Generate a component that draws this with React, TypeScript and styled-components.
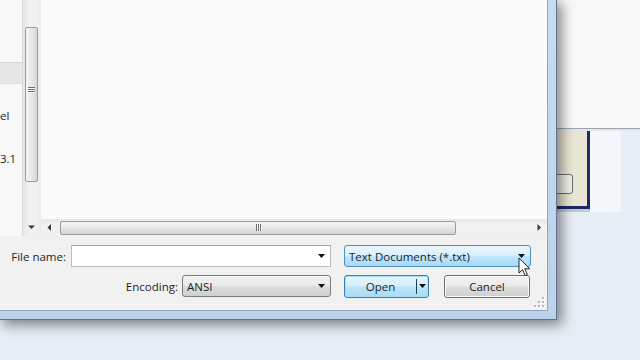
import React from 'react'
import styled, { createGlobalStyle } from 'styled-components'

const GlobalStyle = createGlobalStyle`
  html, body {
    margin: 0;
    padding: 0;
    background: #e7edf4;
    overflow: hidden;
  }
`

const Desktop = styled.div`
  position: relative;
  width: 640px;
  height: 360px;
  overflow: hidden;
  background: #e7edf4;
  font-family: "Open Sans", "Noto Sans", sans-serif;
  font-size: 11.5px;
  color: #1e1e1e;
`

// window behind the dialog, on the right
const BackWindow = styled.div`
  position: absolute;
  left: 500px;
  top: 0;
  width: 140px;
  height: 214px;
  display: flex;
  flex-direction: column;
`

const BackTop = styled.div`
  height: 128px;
  background: #f8f8f8;
`

const BackRule = styled.div`
  height: 2px;
  border-top: 1px solid #9ca3ab;
  background: #dfe6ee;
`

const BackBody = styled.div`
  flex: 1;
  display: flex;
`

const BeigePanel = styled.div`
  width: 90px;
  display: flex;
  flex-direction: column;
  align-items: flex-end;
  padding: 43px 14px 0 0;
  box-sizing: border-box;
  background: linear-gradient(90deg, #efece0 0%, #e9e5d2 100%);
  border-right: 3px solid #1b2a6b;
  border-bottom: 3px solid #1b2a6b;
  box-shadow: 0 3px 0 #c4c8cf;
  height: 78px;
`

const BackButton = styled.div`
  width: 50px;
  height: 18px;
  border: 1px solid #6f6f6f;
  border-radius: 3px;
  background: #f1f0ea;
`

const LightPanel = styled.div`
  flex: 1;
  height: 81px;
  background: linear-gradient(90deg, #f6f8fb 0%, #f4f7fa 60%, #e8eef5 62%, #e8eef5 100%);
`

// the Open dialog
const Dialog = styled.div`
  position: absolute;
  left: 0;
  top: 0;
  width: 557px;
  height: 320px;
  box-sizing: border-box;
  padding: 0 7px 7px 0;
  background: linear-gradient(180deg, #c9dcef 0%, #bcd2ea 100%);
  border-right: 1px solid #5e7591;
  border-bottom: 1px solid #5e7591;
  box-shadow: 4px 4px 12px 1px rgba(0, 0, 0, 0.45);
`

const Client = styled.div`
  width: 548px;
  height: 311px;
  display: flex;
  flex-direction: column;
  background: #f1f1f1;
  border-right: 1px solid #90a6c0;
  border-bottom: 1px solid #90a6c0;
  box-sizing: border-box;
`

const Panes = styled.div`
  height: 236px;
  display: flex;
`

const NavPane = styled.div`
  width: 23px;
  background: #f8f8f8;
  border-right: 1px solid #d9d9d9;
  box-sizing: border-box;
  display: flex;
  flex-direction: column;
  overflow: hidden;
`

const NavItem = styled.div<{ $top: number; $selected?: boolean }>`
  margin-top: ${p => p.$top}px;
  height: 20px;
  display: flex;
  align-items: center;
  white-space: nowrap;
  background: ${p => (p.$selected ? '#e6e6e6' : 'transparent')};
  border-top: 1px solid ${p => (p.$selected ? '#d6d6d6' : 'transparent')};
  border-bottom: 1px solid ${p => (p.$selected ? '#dedede' : 'transparent')};
`

const VScroll = styled.div`
  width: 16px;
  display: flex;
  flex-direction: column;
  align-items: center;
  background: linear-gradient(90deg, #e6e6e6 0%, #f2f2f2 40%, #f0f0f0 100%);
`

const VThumb = styled.div`
  margin-top: 27px;
  width: 13px;
  height: 155px;
  box-sizing: border-box;
  border: 1px solid #9a9a9a;
  border-radius: 2px;
  background: linear-gradient(90deg, #f4f4f4 0%, #e9e9e9 45%, #d6d6d6 100%);
  display: flex;
  align-items: center;
  justify-content: center;
  padding-bottom: 30px;
`

const Grip = styled.div<{ $vertical?: boolean }>`
  display: flex;
  flex-direction: ${p => (p.$vertical ? 'row' : 'column')};
  gap: 1px;
  & > span {
    display: block;
    width: ${p => (p.$vertical ? '1px' : '7px')};
    height: ${p => (p.$vertical ? '7px' : '1px')};
    background: #6b6b6b;
    box-shadow: ${p => (p.$vertical ? '1px 0 0 #fff' : '0 1px 0 #fff')};
  }
`

const ArrowCell = styled.div`
  width: 16px;
  height: 17px;
  display: flex;
  align-items: center;
  justify-content: center;
  flex-shrink: 0;
`

const Spacer = styled.div`
  flex: 1;
`

const Splitter = styled.div`
  width: 2px;
  background: #ececec;
`

const MainPane = styled.div`
  flex: 1;
  display: flex;
  flex-direction: column;
`

const ListArea = styled.div`
  flex: 1;
  background: #fbfbfb;
`

const HScroll = styled.div`
  height: 17px;
  display: flex;
  align-items: center;
  background: linear-gradient(180deg, #e7e7e7 0%, #f2f2f2 40%, #f0f0f0 100%);
`

const HThumb = styled.div`
  margin-left: 3px;
  width: 396px;
  height: 14px;
  box-sizing: border-box;
  border: 1px solid #9a9a9a;
  border-radius: 2px;
  background: linear-gradient(180deg, #f4f4f4 0%, #e8e8e8 45%, #d3d3d3 100%);
  display: flex;
  align-items: center;
  justify-content: center;
`

const Footer = styled.div`
  flex: 1;
  position: relative;
  display: flex;
  flex-direction: column;
  gap: 8px;
  padding-top: 9px;
`

const Row = styled.div`
  display: flex;
  align-items: center;
  height: 22px;
`

const Label = styled.div<{ $width: number; $gap: number }>`
  width: ${p => p.$width}px;
  text-align: right;
  margin-right: ${p => p.$gap}px;
  flex-shrink: 0;
`

const Combo = styled.div<{ $width: number; $variant: 'edit' | 'list' | 'hover' }>`
  width: ${p => p.$width}px;
  height: 22px;
  box-sizing: border-box;
  display: flex;
  align-items: center;
  padding-left: 4px;
  margin-right: ${p => (p.$variant === 'hover' ? 0 : 13)}px;
  flex-shrink: 0;
  border: 1px solid ${p => (p.$variant === 'edit' ? '#b8bcc3' : p.$variant === 'hover' ? '#4e8fc2' : '#7c7c7c')};
  border-top-color: ${p => (p.$variant === 'edit' ? '#9da3ac' : undefined)};
  border-radius: ${p => (p.$variant === 'edit' ? 1 : 3)}px;
  background: ${p =>
    p.$variant === 'edit'
      ? '#ffffff'
      : p.$variant === 'hover'
        ? 'linear-gradient(180deg, #eaf6fd 0%, #d9f0fc 48%, #bee6fd 52%, #a7d9f5 100%)'
        : 'linear-gradient(180deg, #f2f2f2 0%, #ebebeb 48%, #dddddd 52%, #cfcfcf 100%)'};
`

const ComboText = styled.span`
  flex: 1;
  white-space: nowrap;
`

const DropArrow = styled.div`
  width: 17px;
  display: flex;
  justify-content: center;
  align-items: center;
`

const Button = styled.div<{ $width: number; $default?: boolean }>`
  width: ${p => p.$width}px;
  height: 23px;
  box-sizing: border-box;
  margin-right: 15px;
  display: flex;
  align-items: center;
  border: 1px solid ${p => (p.$default ? '#3c7fb1' : '#707070')};
  border-radius: 3px;
  box-shadow: inset 0 0 0 1px ${p => (p.$default ? '#a8dff7' : '#fbfbfb')};
  background: ${p =>
    p.$default
      ? 'linear-gradient(180deg, #e8f6fd 0%, #d5eefc 48%, #bde4f8 52%, #a9dcf6 100%)'
      : 'linear-gradient(180deg, #f2f2f2 0%, #ebebeb 48%, #dddddd 52%, #cfcfcf 100%)'};
`

const ButtonText = styled.span`
  flex: 1;
  text-align: center;
`

const SplitPart = styled.div`
  width: 11px;
  height: 15px;
  border-left: 1px solid #1e3f5c;
  display: flex;
  align-items: center;
  justify-content: center;
`

const ResizeGrip = styled.svg`
  position: absolute;
  right: 2px;
  bottom: 2px;
`

const Cursor = styled.svg`
  position: absolute;
  left: 518px;
  top: 257px;
`

function Down (): JSX.Element {
  return (
    <svg width='7' height='4' viewBox='0 0 7 4'>
      <path d='M0 0 H7 L3.5 4 Z' fill='#111' />
    </svg>
  )
}

function Tri ({ dir }: { dir: 'left' | 'right' | 'down' }): JSX.Element {
  const d = dir === 'left' ? 'M4 0 V7 L0.5 3.5 Z' : dir === 'right' ? 'M0.5 0 V7 L4 3.5 Z' : 'M0 0.5 H7 L3.5 4 Z'
  const w = dir === 'down' ? 7 : 5
  const h = dir === 'down' ? 5 : 7
  return (
    <svg width={w} height={h} viewBox={`0 0 ${w} ${h}`}>
      <path d={d} fill='#3a3a3a' />
    </svg>
  )
}

export default function App (): JSX.Element {
  return (
    <>
      <GlobalStyle />
      <Desktop>
        <BackWindow>
          <BackTop />
          <BackRule />
          <BackBody>
            <BeigePanel>
              <BackButton />
            </BeigePanel>
            <LightPanel />
          </BackBody>
        </BackWindow>

        <Dialog>
          <Client>
            <Panes>
              <NavPane>
                <NavItem $top={62} $selected />
                <NavItem $top={20}>el</NavItem>
                <NavItem $top={21}>3.1</NavItem>
              </NavPane>

              <VScroll>
                <VThumb>
                  <Grip><span /><span /><span /></Grip>
                </VThumb>
                <Spacer />
                <ArrowCell><Tri dir='down' /></ArrowCell>
              </VScroll>

              <Splitter />

              <MainPane>
                <ListArea />
                <HScroll>
                  <ArrowCell><Tri dir='left' /></ArrowCell>
                  <HThumb>
                    <Grip $vertical><span /><span /><span /></Grip>
                  </HThumb>
                  <Spacer />
                  <ArrowCell><Tri dir='right' /></ArrowCell>
                </HScroll>
              </MainPane>
            </Panes>

            <Footer>
              <Row>
                <Label $width={66} $gap={5}>File name:</Label>
                <Combo $width={260} $variant='edit'>
                  <ComboText />
                  <DropArrow><Down /></DropArrow>
                </Combo>
                <Combo $width={187} $variant='hover'>
                  <ComboText>Text Documents (*.txt)</ComboText>
                  <DropArrow><Down /></DropArrow>
                </Combo>
              </Row>
              <Row>
                <Label $width={178} $gap={4}>Encoding:</Label>
                <Combo $width={149} $variant='list'>
                  <ComboText>ANSI</ComboText>
                  <DropArrow><Down /></DropArrow>
                </Combo>
                <Button $width={85} $default>
                  <ButtonText>Open</ButtonText>
                  <SplitPart><Down /></SplitPart>
                </Button>
                <Button $width={86}>
                  <ButtonText>Cancel</ButtonText>
                </Button>
              </Row>
              <ResizeGrip width='11' height='11' viewBox='0 0 11 11'>
                {[[8, 0], [8, 4], [4, 4], [8, 8], [4, 8], [0, 8]].map(([x, y], i) => (
                  <g key={i}>
                    <rect x={x + 1} y={y + 1} width='2' height='2' fill='#fff' />
                    <rect x={x} y={y} width='2' height='2' fill='#b4b9c0' />
                  </g>
                ))}
              </ResizeGrip>
            </Footer>
          </Client>
        </Dialog>

        <Cursor width='14' height='21' viewBox='0 0 14 21'>
          <path
            d='M1 1 V16 L4.6 12.6 L7.2 18.6 L9.4 17.6 L6.8 11.8 H11.6 Z'
            fill='#fff'
            stroke='#222'
            strokeWidth='1'
            strokeLinejoin='round'
          />
        </Cursor>
      </Desktop>
    </>
  )
}
